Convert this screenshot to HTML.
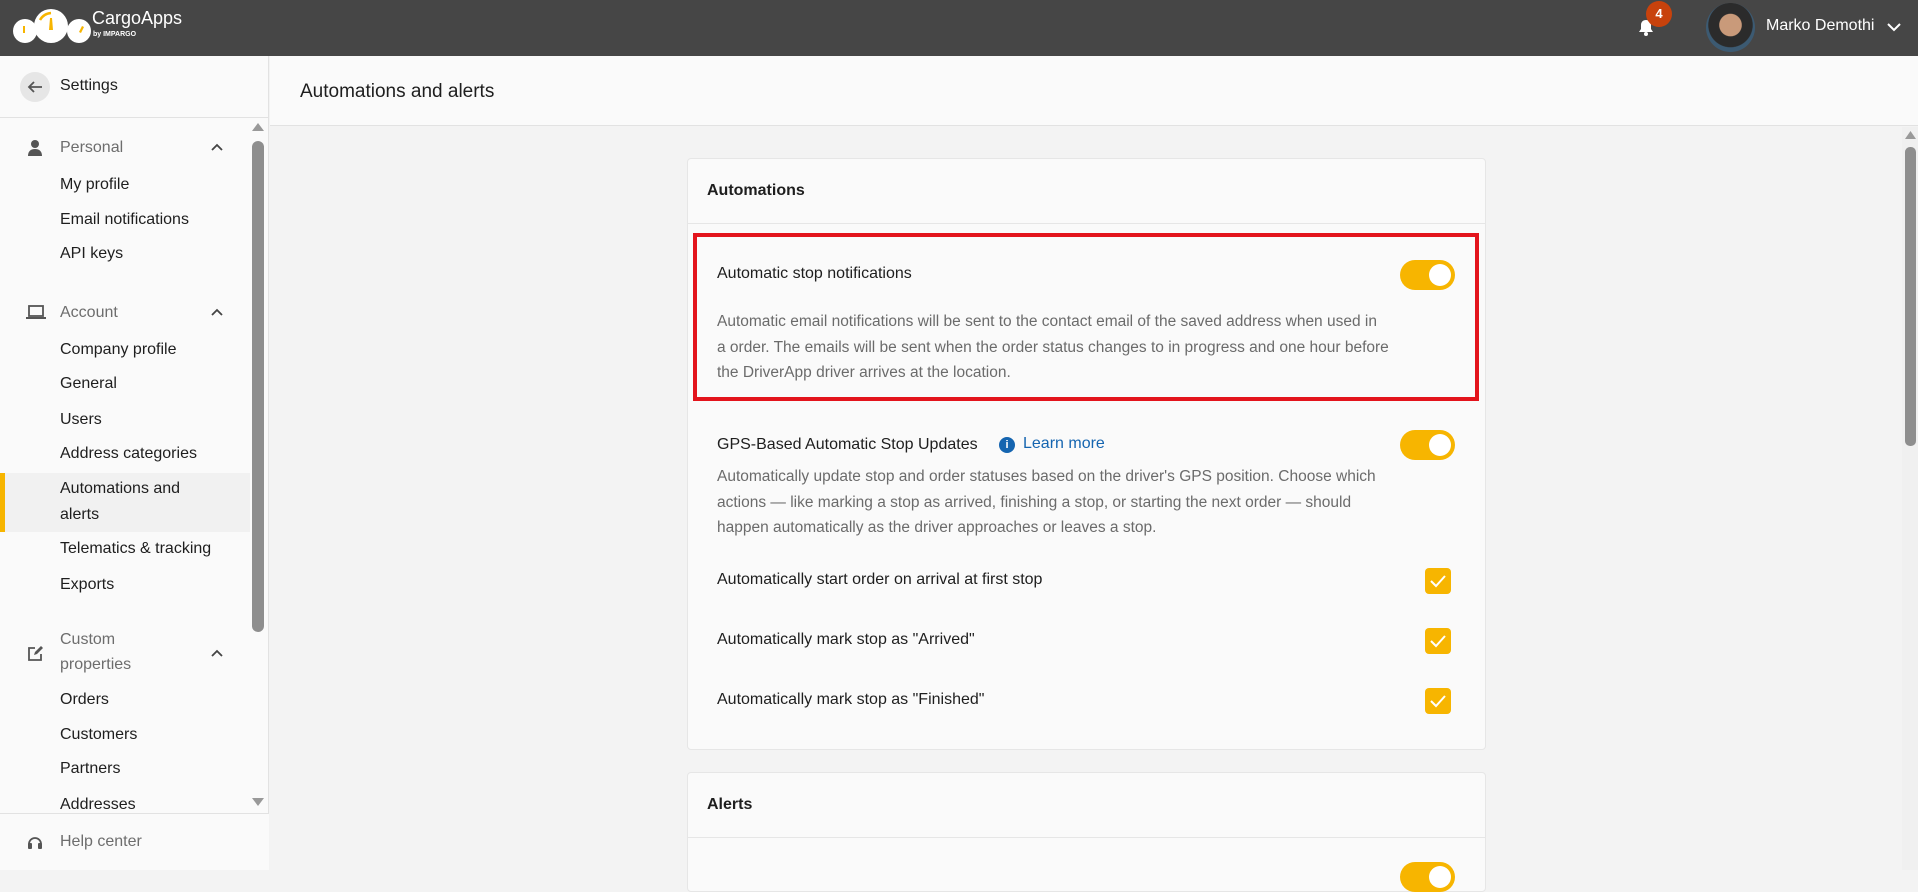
<!DOCTYPE html>
<html><head><meta charset="utf-8"><style>
*{box-sizing:border-box;margin:0;padding:0}
body{width:1918px;height:870px;overflow:hidden;background:#f3f3f3;font-family:"Liberation Sans",sans-serif;color:#1e1e1e;position:relative}
.a{position:absolute;white-space:nowrap}
.top{left:0;top:0;width:1918px;height:56px;background:#464646}
.side{left:0;top:56px;width:269px;height:814px;background:#fafafa;border-right:1px solid #e2e2e2}
.si{font-size:16px;color:#1e1e1e;left:60px}
.sh{font-size:16px;color:#6d6d6d;left:60px}
.card{background:#fafafa;border:1px solid #e6e6e6;border-radius:4px}
.tg{width:55px;height:30px;border-radius:15px;background:#f7b500}
.tg::after{content:"";position:absolute;right:4px;top:4px;width:22px;height:22px;border-radius:50%;background:#fff}
.cb{width:26px;height:26px;border-radius:4px;background:#f7b500}
.d{font-size:15.5px;color:#6b6b6b;line-height:25.5px}
.t{font-size:16px;color:#1e1e1e}
</style></head><body>
<div class="a top"></div>
<svg class="a" style="left:12px;top:6px" width="130" height="40" viewBox="0 0 130 40">
<circle cx="13" cy="25" r="12" fill="#fff"/><circle cx="39" cy="20" r="17" fill="#fff"/><circle cx="67" cy="25" r="12" fill="#fff"/>
<path d="M28 14 A14 14 0 0 1 39 7" stroke="#f7b500" stroke-width="2.5" fill="none"/>
<path d="M38 12 L40 12 L41 24 L37 24Z" fill="#f7b500"/><path d="M11 20 L13 20 L13 27 L11 27Z" fill="#f7b500"/><path d="M70 20 L72 21 L69 27 L67 26Z" fill="#f7b500"/>
</svg>
<div class="a" style="left:92px;top:8px;color:#fff;font-size:18px">CargoApps</div>
<div class="a" style="left:93px;top:31px;color:#fff;font-size:7px;font-weight:bold">by IMPARGO</div>
<svg class="a" style="left:1638px;top:19px" width="16" height="17" viewBox="0 0 16 17"><path d="M8 1c-3 0-5 2-5 5v4l-2 3h14l-2-3V6c0-3-2-5-5-5z" fill="#fff"/><circle cx="8" cy="15" r="2" fill="#fff"/></svg>
<div class="a" style="left:1646px;top:1px;width:26px;height:26px;border-radius:50%;background:#c8420c;color:#fff;font-size:13px;font-weight:bold;text-align:center;line-height:26px">4</div>
<div class="a" style="left:1706px;top:3px;width:49px;height:49px;border-radius:50%;background:radial-gradient(circle at 50% 45%,#c99a7a 0 30%,#2b2b2b 32% 60%,#3c5a72 62%)"></div>
<div class="a" style="left:1766px;top:17px;color:#fff;font-size:16px">Marko Demothi</div>
<svg class="a" style="left:1887px;top:23px" width="14" height="9"><path d="M1 1l6 6 6-6" stroke="#fff" stroke-width="2" fill="none"/></svg>

<div class="a side"></div>
<div class="a" style="left:20px;top:72px;width:30px;height:30px;border-radius:50%;background:#e6e6e6"></div>
<svg class="a" style="left:27px;top:80px" width="16" height="14"><path d="M15 7H2M7 2L2 7l5 5" stroke="#555" stroke-width="1.8" fill="none"/></svg>
<div class="a" style="left:60px;top:77px;font-size:16px">Settings</div>
<div class="a" style="left:0;top:117px;width:269px;height:1px;background:#e2e2e2"></div>
<svg class="a" style="left:27px;top:139px" width="16" height="17"><circle cx="8" cy="5" r="4" fill="#555"/><path d="M1 17c0-5 3-7 7-7s7 2 7 7z" fill="#555"/></svg>
<div class="a sh" style="top:139px">Personal</div>
<svg class="a" style="left:211px;top:143px" width="12" height="8"><path d="M1 7l5-5 5 5" stroke="#444" stroke-width="1.8" fill="none"/></svg>
<div class="a si" style="top:176px">My profile</div>
<div class="a si" style="top:211px">Email notifications</div>
<div class="a si" style="top:245px">API keys</div>
<svg class="a" style="left:26px;top:305px" width="20" height="15"><rect x="3" y="1" width="14" height="10" stroke="#555" stroke-width="1.8" fill="none"/><path d="M0 13h20" stroke="#555" stroke-width="2"/></svg>
<div class="a sh" style="top:304px">Account</div>
<svg class="a" style="left:211px;top:308px" width="12" height="8"><path d="M1 7l5-5 5 5" stroke="#444" stroke-width="1.8" fill="none"/></svg>
<div class="a si" style="top:341px">Company profile</div>
<div class="a si" style="top:375px">General</div>
<div class="a si" style="top:411px">Users</div>
<div class="a si" style="top:445px">Address categories</div>
<div class="a" style="left:0;top:473px;width:250px;height:59px;background:#f1f1f1"></div>
<div class="a" style="left:0;top:473px;width:5px;height:59px;background:#f7b500"></div>
<div class="a si" style="top:480px">Automations and</div>
<div class="a si" style="top:506px">alerts</div>
<div class="a si" style="top:540px">Telematics &amp; tracking</div>
<div class="a si" style="top:576px">Exports</div>
<svg class="a" style="left:27px;top:645px" width="17" height="17"><path d="M14 9v6H2V3h6" stroke="#555" stroke-width="1.8" fill="none"/><path d="M7 10l1-3 6-6 2 2-6 6z" fill="#555"/></svg>
<div class="a sh" style="top:631px">Custom</div>
<div class="a sh" style="top:656px">properties</div>
<svg class="a" style="left:211px;top:649px" width="12" height="8"><path d="M1 7l5-5 5 5" stroke="#444" stroke-width="1.8" fill="none"/></svg>
<div class="a si" style="top:691px">Orders</div>
<div class="a si" style="top:726px">Customers</div>
<div class="a si" style="top:760px">Partners</div>
<div class="a si" style="top:796px">Addresses</div>
<div class="a" style="left:0;top:813px;width:269px;height:57px;background:#fafafa;border-top:1px solid #e2e2e2"></div>
<svg class="a" style="left:27px;top:835px" width="16" height="16"><path d="M2 9a6 6 0 0 1 12 0" stroke="#555" stroke-width="1.8" fill="none"/><rect x="1" y="8" width="4" height="6" rx="1" fill="#555"/><rect x="11" y="8" width="4" height="6" rx="1" fill="#555"/></svg>
<div class="a sh" style="top:833px">Help center</div>
<div class="a" style="left:252px;top:141px;width:12px;height:491px;border-radius:6px;background:#8e8e8e"></div>
<svg class="a" style="left:252px;top:122px" width="12" height="9"><path d="M0 9L6 1l6 8z" fill="#999"/></svg>
<svg class="a" style="left:252px;top:798px" width="12" height="9"><path d="M0 0l6 8 6-8z" fill="#999"/></svg>

<div class="a" style="left:270px;top:56px;width:1648px;height:70px;background:#fafafa;border-bottom:1px solid #e2e2e2"></div>
<div class="a" style="left:300px;top:81px;font-size:19px">Automations and alerts</div>
<div class="a" style="left:1902px;top:127px;width:16px;height:743px;background:#f0f0f0"></div>
<div class="a" style="left:1905px;top:147px;width:11px;height:299px;border-radius:5px;background:#8e8e8e"></div>
<svg class="a" style="left:1905px;top:131px" width="11" height="8"><path d="M0 8L5.5 0 11 8z" fill="#999"/></svg>

<div class="a card" style="left:687px;top:158px;width:799px;height:592px"></div>
<div class="a" style="left:707px;top:182px;font-size:16px;font-weight:bold">Automations</div>
<div class="a" style="left:688px;top:223px;width:797px;height:1px;background:#e6e6e6"></div>
<div class="a" style="left:693px;top:233px;width:786px;height:168px;border:4px solid #e3141c"></div>
<div class="a t" style="left:717px;top:265px">Automatic stop notifications</div>
<div class="a tg" style="left:1400px;top:260px"></div>
<div class="a d" style="left:717px;top:309px">Automatic email notifications will be sent to the contact email of the saved address when used in<br>a order. The emails will be sent when the order status changes to in progress and one hour before<br>the DriverApp driver arrives at the location.</div>
<div class="a t" style="left:717px;top:436px">GPS-Based Automatic Stop Updates</div>
<div class="a" style="left:999px;top:437px;width:16px;height:16px;border-radius:50%;background:#1565b0;color:#fff;font-size:11px;font-weight:bold;text-align:center;line-height:16px">i</div>
<div class="a" style="left:1023px;top:435px;font-size:16px;color:#1565b0">Learn more</div>
<div class="a tg" style="left:1400px;top:430px"></div>
<div class="a d" style="left:717px;top:464px">Automatically update stop and order statuses based on the driver's GPS position. Choose which<br>actions — like marking a stop as arrived, finishing a stop, or starting the next order — should<br>happen automatically as the driver approaches or leaves a stop.</div>
<div class="a t" style="left:717px;top:571px">Automatically start order on arrival at first stop</div>
<div class="a t" style="left:717px;top:631px">Automatically mark stop as "Arrived"</div>
<div class="a t" style="left:717px;top:691px">Automatically mark stop as "Finished"</div>
<svg class="a" style="left:1425px;top:568px" width="26" height="146"><g fill="#f7b500"><rect width="26" height="26" rx="4"/><rect y="60" width="26" height="26" rx="4"/><rect y="120" width="26" height="26" rx="4"/></g><g stroke="#fff" stroke-width="2" fill="none"><path d="M6 13l5 5 9-10"/><path d="M6 73l5 5 9-10"/><path d="M6 133l5 5 9-10"/></g></svg>

<div class="a card" style="left:687px;top:772px;width:799px;height:120px"></div>
<div class="a" style="left:707px;top:796px;font-size:16px;font-weight:bold">Alerts</div>
<div class="a" style="left:688px;top:837px;width:797px;height:1px;background:#e6e6e6"></div>
<div class="a tg" style="left:1400px;top:862px"></div>
</body></html>
